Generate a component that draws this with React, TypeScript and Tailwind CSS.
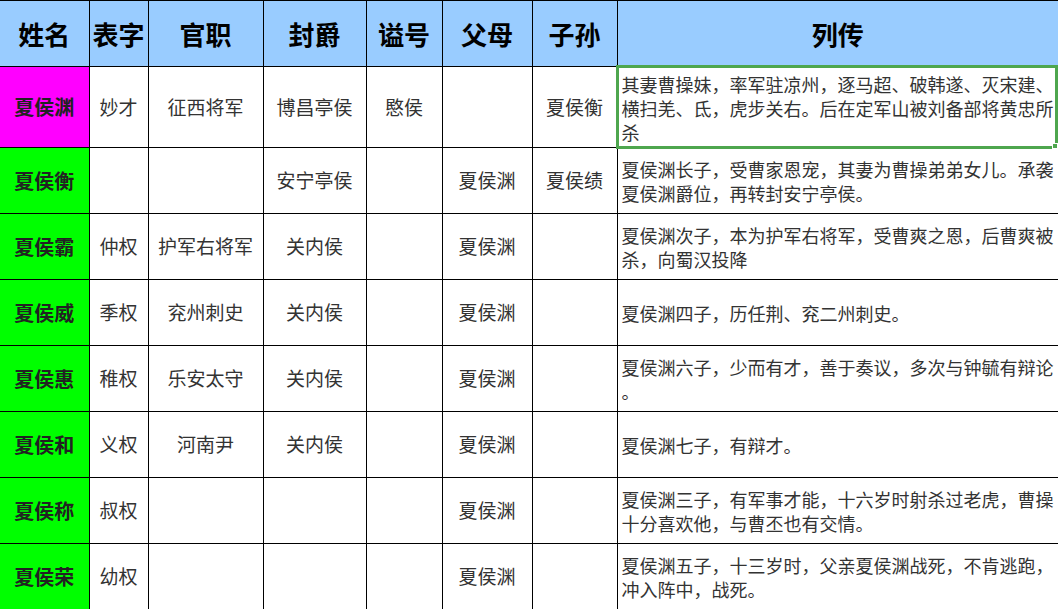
const font = { fontFamily: '"Noto Sans CJK SC", "Noto Sans", sans-serif' };

type Row = {
  name: string;
  zi: string;
  guan: string;
  feng: string;
  shi: string;
  fumu: string;
  zisun: string;
  bio: string[];
  highlight?: boolean;
};

const rows: Row[] = [
  {
    name: "夏侯渊",
    zi: "妙才",
    guan: "征西将军",
    feng: "博昌亭侯",
    shi: "愍侯",
    fumu: "",
    zisun: "夏侯衡",
    bio: [
      "其妻曹操妹，率军驻凉州，逐马超、破韩遂、灭宋建、",
      "横扫羌、氐，虎步关右。后在定军山被刘备部将黄忠所",
      "杀",
    ],
    highlight: true,
  },
  {
    name: "夏侯衡",
    zi: "",
    guan: "",
    feng: "安宁亭侯",
    shi: "",
    fumu: "夏侯渊",
    zisun: "夏侯绩",
    bio: [
      "夏侯渊长子，受曹家恩宠，其妻为曹操弟弟女儿。承袭",
      "夏侯渊爵位，再转封安宁亭侯。",
    ],
  },
  {
    name: "夏侯霸",
    zi: "仲权",
    guan: "护军右将军",
    feng: "关内侯",
    shi: "",
    fumu: "夏侯渊",
    zisun: "",
    bio: [
      "夏侯渊次子，本为护军右将军，受曹爽之恩，后曹爽被",
      "杀，向蜀汉投降",
    ],
  },
  {
    name: "夏侯威",
    zi: "季权",
    guan: "兖州刺史",
    feng: "关内侯",
    shi: "",
    fumu: "夏侯渊",
    zisun: "",
    bio: ["夏侯渊四子，历任荆、兖二州刺史。"],
  },
  {
    name: "夏侯惠",
    zi: "稚权",
    guan: "乐安太守",
    feng: "关内侯",
    shi: "",
    fumu: "夏侯渊",
    zisun: "",
    bio: ["夏侯渊六子，少而有才，善于奏议，多次与钟毓有辩论", "。"],
  },
  {
    name: "夏侯和",
    zi: "义权",
    guan: "河南尹",
    feng: "关内侯",
    shi: "",
    fumu: "夏侯渊",
    zisun: "",
    bio: ["夏侯渊七子，有辩才。"],
  },
  {
    name: "夏侯称",
    zi: "叔权",
    guan: "",
    feng: "",
    shi: "",
    fumu: "夏侯渊",
    zisun: "",
    bio: [
      "夏侯渊三子，有军事才能，十六岁时射杀过老虎，曹操",
      "十分喜欢他，与曹丕也有交情。",
    ],
  },
  {
    name: "夏侯荣",
    zi: "幼权",
    guan: "",
    feng: "",
    shi: "",
    fumu: "夏侯渊",
    zisun: "",
    bio: [
      "夏侯渊五子，十三岁时，父亲夏侯渊战死，不肯逃跑，",
      "冲入阵中，战死。",
    ],
  },
];

const headers = ["姓名", "表字", "官职", "封爵", "谥号", "父母", "子孙", "列传"];
const widths = [89, 59, 115, 103, 76, 90, 85, 441];

export default function App() {
  return (
    <div className="w-[1058px] h-[609px] overflow-hidden bg-white" style={font}>
      <table className="table-fixed border-collapse w-[1058px]">
        <colgroup>
          {widths.map((w, i) => (
            <col key={i} style={{ width: w }} />
          ))}
        </colgroup>
        <thead>
          <tr className="h-[66px]">
            {headers.map((h, i) => (
              <th
                key={h}
                className={
                  "bg-[#99ccff] border border-black text-[26px] font-bold text-black text-center align-middle p-0 " +
                  (i === 0 ? "border-l-0" : "") +
                  (i === headers.length - 1 ? " border-r-0" : "")
                }
              >
                {h}
              </th>
            ))}
          </tr>
        </thead>
        <tbody>
          {rows.map((r, idx) => (
            <tr key={r.name} className={idx === 0 ? "h-[81px]" : "h-[66px]"}>
              <td
                className={
                  "border border-l-0 border-black text-center align-middle p-0 text-[20px] font-bold text-[#222] " +
                  (r.highlight ? "bg-[#ff00ff]" : "bg-[#00ff00]")
                }
              >
                {r.name}
              </td>
              {[r.zi, r.guan, r.feng, r.shi, r.fumu, r.zisun].map((v, i) => (
                <td
                  key={i}
                  className="border border-black text-center align-middle p-0 text-[19px] text-[#333] whitespace-nowrap"
                >
                  {v}
                </td>
              ))}
              <td className="relative border border-r-0 border-black align-middle pl-[4px] pr-0 pt-[1px] pb-0 text-[18px] leading-[24px] text-[#333]">
                {r.bio.map((line, li) => (
                  <div key={li} className="whitespace-nowrap">
                    {line}
                  </div>
                ))}
                {r.highlight && (
                  <div className="absolute -top-[2px] -left-[2px] -bottom-[2px] right-0 border-[3px] border-[#4ea64e]">
                    <div className="absolute -right-[3px] -bottom-[3px] w-[6px] h-[6px] bg-[#4ea64e] border border-white" />
                  </div>
                )}
              </td>
            </tr>
          ))}
        </tbody>
      </table>
    </div>
  );
}
